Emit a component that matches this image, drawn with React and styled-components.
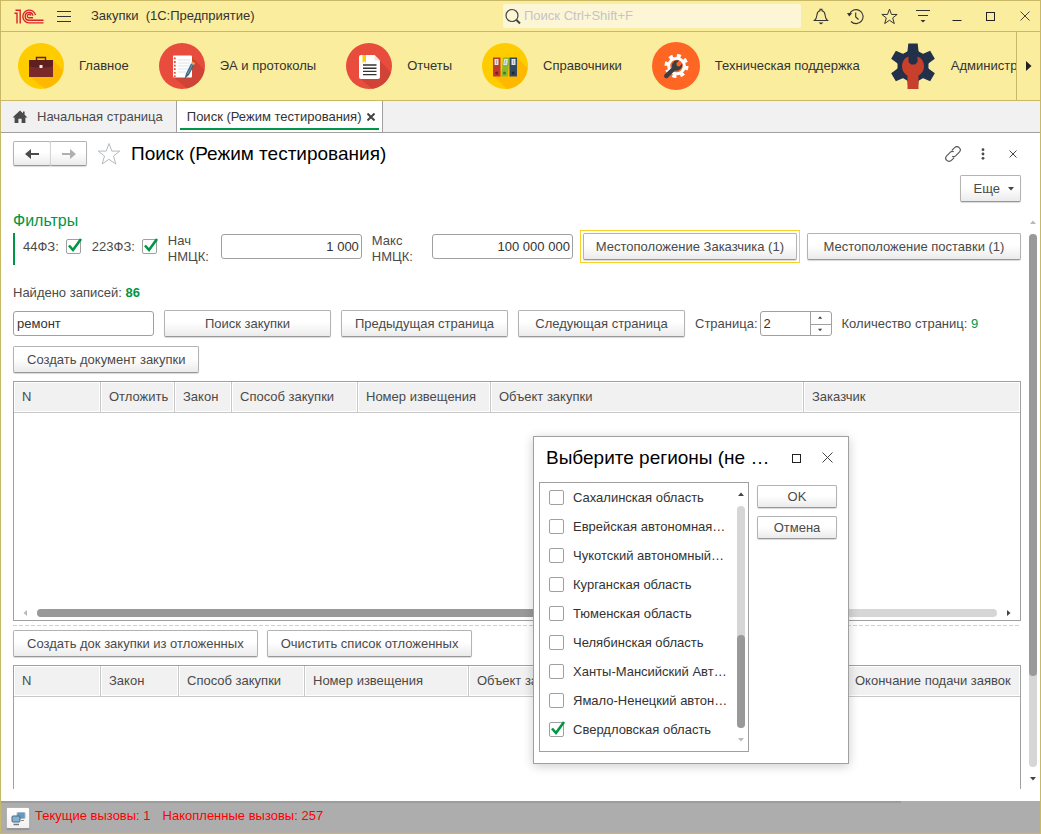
import React, { useState } from "react";
import styled, { createGlobalStyle } from "styled-components";

const sections = [
  { title: "Главное", icon: BriefcaseIcon },
  { title: "ЭА и протоколы", icon: NotebookIcon },
  { title: "Отчеты", icon: ReportIcon },
  { title: "Справочники", icon: BindersIcon },
  { title: "Техническая поддержка", icon: SupportIcon },
  { title: "Администрирование", icon: AdminIcon },
];

const purchaseColumns = [
  { title: "N", width: 87 },
  { title: "Отложить", width: 74 },
  { title: "Закон", width: 57 },
  { title: "Способ закупки", width: 126 },
  { title: "Номер извещения", width: 133 },
  { title: "Объект закупки" },
  { title: "Заказчик", width: 216 },
];

const postponedColumns = [
  { title: "N", width: 87 },
  { title: "Закон", width: 78 },
  { title: "Способ закупки", width: 126 },
  { title: "Номер извещения", width: 164 },
  { title: "Объект закупки" },
  { title: "Окончание подачи заявок", width: 173 },
];

const regions = [
  "Сахалинская область",
  "Еврейская автономная…",
  "Чукотский автономный…",
  "Курганская область",
  "Тюменская область",
  "Челябинская область",
  "Ханты-Мансийский Авт…",
  "Ямало-Ненецкий автон…",
  "Свердловская область",
];

function App() {
  return (
    <Window>
      <GlobalStyle />
      <TitleBar />
      <SectionBar>
        <SectionList>
          {sections.map(({ title, icon: Icon }) => (
            <SectionLink href="#" key={title}>
              <Icon />
              <span>{title}</span>
            </SectionLink>
          ))}
        </SectionList>
        <SectionScroll aria-label="Прокрутить разделы">
          <svg width="6" height="10" viewBox="0 0 6 10">
            <path d="M0 0L5.5 5L0 10Z" fill="#222" />
          </svg>
        </SectionScroll>
      </SectionBar>
      <TabBar>
        <HomeTab href="#">
          <svg width="16" height="14" viewBox="0 0 16 14">
            <path
              d="M8 0.5L0.5 7.5H2.6V13H6.4V8.8H9.6V13H13.4V7.5H15.5L12.6 4.8V1.4H11V3.3Z"
              fill="#4a4a4a"
            />
          </svg>
          Начальная страница
        </HomeTab>
        <ActiveTab>
          <span>Поиск (Режим тестирования)</span>
          <TabClose aria-label="Закрыть вкладку">
            <Cross size={8} width={2} />
          </TabClose>
        </ActiveTab>
      </TabBar>
      <FormHeader />
      <FormBody>
        <Form />
        <VerticalScroll>
          <Arrow dir="up" color="#b9b9b9" />
          <Track>
            <Thumb $size={83} />
          </Track>
          <Arrow dir="down" color="#444" />
        </VerticalScroll>
      </FormBody>
      <StatusBar>
        <StatusButton aria-label="Показатели производительности">
          <MonitorsIcon />
        </StatusButton>
        <StatusText>
          <span>Текущие вызовы: 1</span>
          <span>Накопленные вызовы: 257</span>
        </StatusText>
      </StatusBar>
      <RegionDialog />
    </Window>
  );
}

function TitleBar() {
  return (
    <Header>
      <LogoIcon />
      <MenuButton aria-label="Меню">
        <svg width="14" height="13" viewBox="0 0 14 13">
          <path d="M0 1.5H14M0 6.5H14M0 11.5H14" stroke="#333" />
        </svg>
      </MenuButton>
      <AppTitle>Закупки&nbsp; (1С:Предприятие)</AppTitle>
      <GlobalSearch>
        <svg width="17" height="17" viewBox="0 0 17 17" fill="none" stroke="#444">
          <circle cx="7" cy="7.5" r="6" strokeWidth="1.2" />
          <path d="M11.5 12L15 15.5" strokeWidth="2" />
        </svg>
        <input aria-label="Поиск" placeholder="Поиск Ctrl+Shift+F" />
      </GlobalSearch>
      <TitleTools>
        <ToolButton aria-label="Оповещения">
          <svg width="16" height="17" viewBox="0 0 16 17" fill="none" stroke="#333" strokeWidth="1.1">
            <path d="M1.5 12.5C3.6 11 3.6 9 4 6.5C4.3 4.4 5.4 3.2 7 2.8V1.2H9V2.8C10.6 3.2 11.7 4.4 12 6.5C12.4 9 12.4 11 14.5 12.5Z" />
            <path d="M5.5 14.5H10.5L8 16.5Z" fill="#333" stroke="none" />
          </svg>
        </ToolButton>
        <ToolButton aria-label="История">
          <svg width="17" height="17" viewBox="0 0 17 17" fill="none" stroke="#333" strokeWidth="1.1">
            <path d="M2.5 6.2A7 7 0 1 1 4 13.5M8.7 4.5V9L11.5 11.5" />
            <path d="M0 5L5.2 5.2L2.2 8.5Z" fill="#333" stroke="none" />
          </svg>
        </ToolButton>
        <ToolButton aria-label="Избранное">
          <StarIcon size={17} color="#333" />
        </ToolButton>
        <ToolButton aria-label="Настройки">
          <svg width="14" height="13" viewBox="0 0 14 13">
            <path d="M0 0.5H14M2 5.500H12" stroke="#333" />
            <path d="M4.5 10H9.5L7 12.5Z" fill="#333" />
          </svg>
        </ToolButton>
        <ToolButton aria-label="Свернуть">
          <svg width="10" height="10" viewBox="0 0 10 10">
            <path d="M0.5 9.5H9.5" stroke="#222" />
          </svg>
        </ToolButton>
        <ToolButton aria-label="Развернуть">
          <SquareIcon />
        </ToolButton>
        <ToolButton aria-label="Закрыть">
          <Cross size={10} width={1} />
        </ToolButton>
      </TitleTools>
    </Header>
  );
}

function FormHeader() {
  return (
    <FormTop>
      <TitleRow>
        <History>
          <HistoryButton aria-label="Назад">
            <ArrowLeft color="#4a4a4a" />
          </HistoryButton>
          <HistoryButton aria-label="Вперед" disabled>
            <ArrowLeft color="#b0b0b0" flip />
          </HistoryButton>
        </History>
        <IconButton aria-label="В избранное">
          <StarIcon size={24} color="#b5b9c0" />
        </IconButton>
        <FormTitle>Поиск (Режим тестирования)</FormTitle>
        <FormTools>
          <IconButton aria-label="Ссылка">
            <svg width="16" height="16" viewBox="0 0 16 16" fill="none" stroke="#5a5a5a" strokeWidth="1.2">
              <path d="M6.8 4.4L9.6 1.7A2.8 2.8 0 0 1 14.3 6.2L10.6 9.9A2.8 2.8 0 0 1 7.2 10.2" />
              <path d="M9.2 11.6L6.4 14.3A2.8 2.8 0 0 1 1.7 9.8L5.4 6.1A2.8 2.8 0 0 1 8.8 5.8" />
            </svg>
          </IconButton>
          <IconButton aria-label="Дополнительно">
            <svg width="4" height="12" viewBox="0 0 4 12" fill="#4a4a4a">
              <circle cx="2" cy="1.7" r="1.4" />
              <circle cx="2" cy="6" r="1.4" />
              <circle cx="2" cy="10.3" r="1.4" />
            </svg>
          </IconButton>
          <IconButton aria-label="Закрыть форму">
            <Cross size={8} width={1} />
          </IconButton>
        </FormTools>
      </TitleRow>
      <MoreButton>
        Еще
        <Arrow dir="down" color="#444" />
      </MoreButton>
    </FormTop>
  );
}

function Form() {
  const [page, setPage] = useState(2);

  return (
    <FormMain>
      <GroupTitle>Фильтры</GroupTitle>
      <Filters>
        <CheckLabel>
          44ФЗ:
          <CheckBox defaultChecked />
        </CheckLabel>
        <CheckLabel>
          223ФЗ:
          <CheckBox defaultChecked />
        </CheckLabel>
        <PriceLabel htmlFor="min-price" $width={43}>
          Нач НМЦК:
        </PriceLabel>
        <PriceInput id="min-price" defaultValue="1 000" />
        <PriceLabel htmlFor="max-price" $width={50}>
          Макс НМЦК:
        </PriceLabel>
        <PriceInput id="max-price" defaultValue="100 000 000" />
        <PlaceButton $focused>Местоположение Заказчика (1)</PlaceButton>
        <PlaceButton>Местоположение поставки (1)</PlaceButton>
      </Filters>
      <Found>
        Найдено записей: <b>86</b>
      </Found>
      <SearchRow>
        <TextInput aria-label="Строка поиска" defaultValue="ремонт" />
        <WideButton>Поиск закупки</WideButton>
        <WideButton>Предыдущая страница</WideButton>
        <WideButton>Следующая страница</WideButton>
        <PageLabel>
          Страница:
          <Spinner>
            <input value={page} onChange={(e) => setPage(e.target.value)} />
            <SpinnerButtons>
              <button aria-label="Больше" onClick={() => setPage(Number(page) + 1)}>
                <Arrow dir="up" color="#444" small />
              </button>
              <button aria-label="Меньше" onClick={() => setPage(Number(page) - 1)}>
                <Arrow dir="down" color="#444" small />
              </button>
            </SpinnerButtons>
          </Spinner>
        </PageLabel>
        <span>
          Количество страниц: <Green>9</Green>
        </span>
      </SearchRow>
      <Commands>
        <Button>Создать документ закупки</Button>
      </Commands>
      <PurchaseFrame>
        <ColumnTable columns={purchaseColumns} />
        <HorizontalScroll>
          <Arrow dir="left" color="#b9b9b9" />
          <HorizontalTrack>
            <HorizontalThumb $size={60} />
          </HorizontalTrack>
          <Arrow dir="right" color="#444" />
        </HorizontalScroll>
      </PurchaseFrame>
      <Splitter />
      <PostponedCommands>
        <Button>Создать док закупки из отложенных</Button>
        <Button>Очистить список отложенных</Button>
      </PostponedCommands>
      <PostponedFrame>
        <ColumnTable columns={postponedColumns} />
      </PostponedFrame>
    </FormMain>
  );
}

function ColumnTable({ columns }) {
  return (
    <Table>
      <colgroup>
        {columns.map((col) => (
          <col key={col.title} width={col.width} />
        ))}
      </colgroup>
      <thead>
        <tr>
          {columns.map((col) => (
            <th key={col.title}>{col.title}</th>
          ))}
        </tr>
      </thead>
    </Table>
  );
}

function RegionDialog() {
  return (
    <Dialog role="dialog" aria-labelledby="region-title">
      <DialogHeader>
        <DialogTitle id="region-title">Выберите регионы (не …</DialogTitle>
        <IconButton aria-label="Развернуть окно">
          <SquareIcon />
        </IconButton>
        <IconButton aria-label="Закрыть окно">
          <Cross size={11} width={1} />
        </IconButton>
      </DialogHeader>
      <DialogBody>
        <RegionBox>
          <RegionList>
            {regions.map((region) => (
              <li key={region}>
                <RegionLabel>
                  <CheckBox defaultChecked={region === "Свердловская область"} />
                  {region}
                </RegionLabel>
              </li>
            ))}
          </RegionList>
          <RegionScroll>
            <Arrow dir="up" color="#444" />
            <RegionTrack>
              <Thumb $size={42} />
            </RegionTrack>
            <Arrow dir="down" color="#b9b9b9" />
          </RegionScroll>
        </RegionBox>
        <DialogButtons>
          <DialogButton>OK</DialogButton>
          <DialogButton>Отмена</DialogButton>
        </DialogButtons>
      </DialogBody>
    </Dialog>
  );
}

function CheckBox(props) {
  return (
    <CheckWrap>
      <input type="checkbox" {...props} />
      <svg width="16" height="16" viewBox="0 0 16 16" fill="none">
        <path d="M2 7.5L6 12L14 1" stroke="#009646" strokeWidth="2.6" />
      </svg>
    </CheckWrap>
  );
}

const arrowPaths = {
  up: "M0 4L3 0.5L6 4Z",
  down: "M0 1L3 4.5L6 1Z",
  left: "M4 0L0.5 3L4 6Z",
  right: "M1 0L4.5 3L1 6Z",
};

function Arrow({ dir, color, small }) {
  const vertical = dir === "up" || dir === "down";
  const w = vertical ? 6 : 5;
  const h = vertical ? 5 : 6;
  const k = small ? 0.7 : 1;
  return (
    <svg width={w * k} height={h * k} viewBox={`0 0 ${w} ${h}`}>
      <path d={arrowPaths[dir]} fill={color} />
    </svg>
  );
}

function ArrowLeft({ color, flip }) {
  return (
    <svg width="14" height="10" viewBox="0 0 14 10">
      <path
        d="M0 5L6 0V3.9H14V6.1H6V10Z"
        fill={color}
        transform={flip ? "rotate(180 7 5)" : undefined}
      />
    </svg>
  );
}

function Cross({ size, width }) {
  return (
    <svg width={size} height={size} viewBox={`0 0 ${size} ${size}`}>
      <path
        d={`M0.5 0.5L${size - 0.5} ${size - 0.5}M${size - 0.5} 0.5L0.5 ${size - 0.5}`}
        stroke="#444"
        strokeWidth={width}
      />
    </svg>
  );
}

function SquareIcon() {
  return (
    <svg width="10" height="10" viewBox="0 0 10 10">
      <rect x="0.5" y="1.5" width="8" height="8" fill="none" stroke="#222" />
    </svg>
  );
}

function StarIcon({ size, color }) {
  return (
    <svg width={size} height={size} viewBox="0 0 24 24" fill="none" stroke={color} strokeWidth={24 / size}>
      <path d="M12 1.5L14.8 9.1H22.8L16.5 14L18.8 22L12 17.3L5.2 22L7.5 14L1.2 9.1H9.2Z" />
    </svg>
  );
}

function LogoIcon() {
  return (
    <svg width="30" height="15" viewBox="0 0 30 15" fill="none" stroke="#d8232a" strokeWidth="1.4">
      <path d="M0.500 4.200H3V14.500M1.500 1.200H6.200V14.500" />
      <path d="M21.5 6.2A6.4 6.4 0 1 0 15 13.9H29.500" />
      <path d="M18.9 6.6A3.9 3.9 0 1 0 15 11.3H29.500" />
      <path d="M16.7 6.7A1.7 1.7 0 1 0 15.2 8.7H19" />
    </svg>
  );
}

function BriefcaseIcon() {
  return (
    <svg width="46" height="46" viewBox="0 0 46 46">
      <circle cx="23" cy="23" r="23" fill="#fc0" />
      <path d="M35 17L45 27A23 23 0 0 1 27 45.6L12 34Z" fill="#ffb800" />
      <path d="M18.5 17V14.5H27.5V17" fill="none" stroke="#5d2420" strokeWidth="1.4" />
      <rect x="11" y="17" width="24" height="17" fill="#7a2a28" />
      <path d="M11 17H35V23C30 25 16 25 11 23Z" fill="#5f1f1f" />
      <rect x="21.5" y="22" width="3" height="3" fill="#eee" />
    </svg>
  );
}

function NotebookIcon() {
  return (
    <svg width="46" height="46" viewBox="0 0 46 46">
      <circle cx="23" cy="23" r="23" fill="#e84c3d" />
      <path d="M33 14L45.5 27A23 23 0 0 1 28 45.4L14 34Z" fill="#cf4436" />
      <rect x="14" y="12.5" width="19" height="22" rx="1" fill="#fff" />
      <path d="M19 17H31M19 20H31M19 23H30M19 26H29M19 29H27" stroke="#dce3e6" />
      <path d="M15.8 14.5V34" stroke="#e84c3d" strokeWidth="1.8" strokeDasharray="1.8 1.8" />
      <path d="M25.5 36L27 30.5L32 20.5L35.2 22L30 32Z" fill="#3f6b82" />
      <path d="M31.9 20.7L33 18.5L36 20L35 22.2Z" fill="#f3a92a" />
      <path d="M28.5 31L33.5 21.4" stroke="#6f9db5" strokeWidth="1" />
    </svg>
  );
}

function ReportIcon() {
  return (
    <svg width="46" height="46" viewBox="0 0 46 46">
      <circle cx="23" cy="23" r="23" fill="#e84c3d" />
      <path d="M34 18L44.8 29.5A23 23 0 0 1 26 45.8L14 35Z" fill="#cf4436" />
      <path
        d="M15 12H28.5L34 17.500V34A2 2 0 0 1 32 36H15A2 2 0 0 1 13 34V14A2 2 0 0 1 15 12Z"
        fill="#fff"
      />
      <path d="M28.5 12V17.5H34Z" fill="#e6e6e6" />
      <path d="M16.5 12H20V20L18.2 18.2L16.5 20Z" fill="#fc0" />
      <path d="M17 22H30.5M17 25.2H30.5M17 28.4H30.5M17 31.6H30.5" stroke="#333" strokeWidth="1.4" />
    </svg>
  );
}

function BindersIcon() {
  return (
    <svg width="46" height="46" viewBox="0 0 46 46">
      <circle cx="23" cy="23" r="23" fill="#fc0" />
      <path d="M35 14.5L45.5 25A23 23 0 0 1 25 46L12 33.5Z" fill="#ffb800" />
      <rect x="11" y="14.5" width="7.5" height="19" fill="#c0392b" />
      <path d="M21 14.5H27.5L25.5 33.5H19.5Z" fill="#8ab82e" />
      <rect x="27.5" y="14.5" width="7.5" height="19" fill="#34495e" />
      <path d="M12.5 16H16.5V22H12.500ZM22 16H26L25 22H21.3ZM29.5 16H33.500V22H29.5Z" fill="#dde2e4" />
      <path d="M14.5 17V21M23.7 17L23 21M31.5 17V21" stroke="#aaa" />
      <circle cx="14.700" cy="30" r="1.5" fill="#7d1f16" />
      <circle cx="22.500" cy="30" r="1.5" fill="#4e7a10" />
      <circle cx="31.200" cy="30" r="1.5" fill="#1c2a38" />
    </svg>
  );
}

function SupportIcon() {
  return (
    <svg width="48" height="48" viewBox="0 0 48 48">
      <circle cx="24" cy="24" r="24" fill="#ff6523" />
      <circle cx="24.500" cy="24" r="10" fill="none" stroke="#fff" strokeWidth="4" strokeDasharray="3.93 3.93" />
      <circle cx="24.500" cy="24" r="7.8" fill="none" stroke="#fff" strokeWidth="3" />
      <path
        d="M12.5 32.5L20 25.5C19 21.5 22.5 17.5 27 18.5L24.3 21.5L25 24L27.500 24.500L30.200 21.5C31 26 27 29.500 23 28.500L15.500 36C13 37 11.300 34.500 12.500 32.500Z"
        fill="#3a3f45"
      />
    </svg>
  );
}

function AdminIcon() {
  return (
    <svg width="46" height="46" viewBox="0 0 46 46">
      <g fill="#22304a">
        <circle cx="23" cy="23" r="15.5" />
        {[0, 60, 120, 180, 240, 300].map((angle) => (
          <path key={angle} d="M15.5 11L17.500 8L18.300 0.500H27.700L28.500 8L30.500 11Z" transform={`rotate(${angle} 23 23)`} />
        ))}
      </g>
      <path
        d="M18.5 13.500V19L21 21.500H25L27.500 19V13.500C31.500 15 34 19 34 23.200C34 27.500 31.500 31 28.500 32.500V46H17.500V32.500C14.500 31 12 27.500 12 23.200C12 19 14.500 15 18.500 13.500Z"
        fill="#c6402c"
      />
    </svg>
  );
}

function MonitorsIcon() {
  return (
    <svg width="15" height="15" viewBox="0 0 15 15">
      <rect x="6" y="1.5" width="8" height="6" rx="1" fill="#5c9cc9" stroke="#aab4bb" />
      <path d="M10 9.500H13" stroke="#888" />
      <rect x="1" y="5" width="8" height="6" rx="1" fill="#7db4dc" stroke="#59666f" />
      <path d="M2.5 13.500H8" stroke="#777" strokeWidth="1.5" />
    </svg>
  );
}

export default App;

const GlobalStyle = createGlobalStyle`
  * {
    box-sizing: border-box;
  }
  body {
    margin: 0;
    background: #fff;
  }
  body, button, input {
    font-family: "Liberation Sans", Arial, sans-serif;
    font-size: 13px;
    line-height: 16px;
    color: #4a4a4a;
  }
  button {
    cursor: pointer;
  }
  svg {
    display: block;
    flex: none;
  }
`;

const Window = styled.div`
  position: relative;
  display: flex;
  flex-direction: column;
  min-height: 100vh;
  border: 1px solid #c9b866;
  background: #fff;
  overflow: hidden;
`;

const Header = styled.header`
  display: flex;
  align-items: center;
  height: 31px;
  padding-left: 13px;
  background: #fbed9e;
  border-bottom: 1px solid #c9b866;
`;
const PlainButton = styled.button`
  display: flex;
  align-items: center;
  justify-content: center;
  padding: 0;
  border: none;
  background: none;
`;
const MenuButton = styled(PlainButton)`
  margin: 0 20px 0 13px;
`;
const AppTitle = styled.span`
  color: #333;
  white-space: nowrap;
`;
const GlobalSearch = styled.label`
  display: flex;
  align-items: center;
  gap: 2px;
  flex: 0 1 298px;
  height: 24px;
  margin-left: auto;
  padding: 0 2px;
  border-radius: 2px;
  background: #fdf6d6;

  input {
    flex: 1;
    min-width: 0;
    padding: 0;
    border: none;
    background: none;
    outline: none;
  }
  input::placeholder {
    color: #c4c4c4;
    opacity: 1;
  }
`;
const TitleTools = styled.div`
  display: flex;
  gap: 4px;
  margin-left: 5px;
`;
const ToolButton = styled(PlainButton)`
  width: 30px;
  height: 30px;
`;

const SectionBar = styled.nav`
  display: flex;
  height: 69px;
  background: #fbed9e;
  border-bottom: 1px solid #c9b866;
`;
const SectionList = styled.div`
  display: flex;
  flex: 1;
  min-width: 0;
  gap: 30px;
  padding-left: 17px;
  overflow: hidden;
`;
const SectionLink = styled.a`
  display: flex;
  flex: none;
  align-items: center;
  gap: 15px;
  color: #333;
  text-decoration: none;
  white-space: nowrap;
`;
const SectionScroll = styled(PlainButton)`
  width: 24px;
  border-left: 1px solid #c9b866;
`;

const TabBar = styled.div`
  display: flex;
  height: 32px;
  background: #f1f1f1;
  border-bottom: 1px solid #a0a0a0;
`;
const HomeTab = styled.a`
  display: flex;
  align-items: center;
  gap: 9px;
  padding: 0 13px 0 11px;
  border-right: 1px solid #a0a0a0;
  color: #4a4a4a;
  text-decoration: none;
  white-space: nowrap;
`;
const ActiveTab = styled.div`
  display: flex;
  align-items: center;
  gap: 6px;
  padding: 0 7px 0 10px;
  border-right: 1px solid #a0a0a0;
  background: linear-gradient(#009646, #009646) 3px 27px / calc(100% - 6px) 2px
    no-repeat #fff;
  color: #333;
  white-space: nowrap;
`;
const TabClose = styled(PlainButton)`
  height: 16px;
`;

const FormTop = styled.div`
  display: flex;
  flex-direction: column;
  padding: 8px 19px 10px 12px;
`;
const TitleRow = styled.div`
  display: flex;
  align-items: center;
  height: 25px;
`;
const Button = styled.button`
  height: 27px;
  padding: 0 13px;
  border: 1px solid #b3b3b3;
  border-bottom-color: #979797;
  border-radius: 2px;
  background: linear-gradient(#fff 45%, #ebebeb);
  box-shadow: 0 1px 1px rgba(0, 0, 0, 0.15);
  white-space: nowrap;
`;
const History = styled.div`
  display: flex;
  margin-right: 10px;
`;
const HistoryButton = styled(Button)`
  display: flex;
  align-items: center;
  justify-content: center;
  width: 38px;
  height: 25px;
  padding: 0;

  & + & {
    width: 37px;
    margin-left: -1px;
    border-left-color: #d6d6d6;
  }
`;
const IconButton = styled(PlainButton)`
  min-width: 16px;
  height: 24px;
`;
const FormTitle = styled.h1`
  margin: 0 0 0 10px;
  font-size: 19px;
  font-weight: normal;
  line-height: 24px;
  color: #000;
  white-space: nowrap;
`;
const FormTools = styled.div`
  display: flex;
  gap: 14px;
  margin-left: auto;
`;
const MoreButton = styled(Button)`
  display: flex;
  align-items: center;
  align-self: flex-end;
  gap: 8px;
  margin-top: 9px;
  padding: 0 6px 0 13px;
`;

const FormBody = styled.div`
  display: flex;
  flex: 1;
`;
const FormMain = styled.main`
  display: flex;
  flex: 1;
  flex-direction: column;
  min-width: 0;
  padding: 0 0 12px 12px;
`;
const GroupTitle = styled.h2`
  margin: 0 0 3px;
  font-size: 16px;
  font-weight: normal;
  line-height: 18px;
  color: #009646;
`;
const Filters = styled.div`
  display: flex;
  gap: 10px;
  padding-left: 8px;
  border-left: 2px solid #009646;
`;
const CheckLabel = styled.label`
  display: flex;
  align-items: center;
  gap: 7px;
  height: 27px;
`;
const CheckWrap = styled.span`
  position: relative;
  flex: none;
  width: 16px;

  input {
    display: block;
    width: 15px;
    height: 15px;
    margin: 0;
    appearance: none;
    border: 1px solid #a0a0a0;
    border-radius: 2px;
    background: #fff;
  }
  svg {
    position: absolute;
    top: -1px;
    left: 1px;
    visibility: hidden;
    pointer-events: none;
  }
  input:checked + svg {
    visibility: visible;
  }
`;
const PriceLabel = styled.label`
  flex: none;
  width: ${(props) => props.$width}px;
`;
const TextInput = styled.input`
  width: 141px;
  height: 25px;
  padding: 0 3px;
  border: 1px solid #a0a0a0;
  border-radius: 3px;
  color: #333;
`;
const PriceInput = styled(TextInput)`
  margin-top: 1px;
  padding: 0 2px;
  text-align: right;
`;
const PlaceButton = styled(Button)`
  position: relative;
  flex: 1;
  padding: 0;

  &::after {
    content: "";
    display: ${(props) => (props.$focused ? "block" : "none")};
    position: absolute;
    inset: -4px;
    border: 1px solid #f9cf2c;
  }
`;
const Found = styled.div`
  margin: 20px 0 9px;

  b {
    color: #009646;
  }
`;
const SearchRow = styled.div`
  display: flex;
  align-items: center;
  gap: 10px;
  white-space: nowrap;
`;
const WideButton = styled(Button)`
  width: 167px;
  padding: 0;
`;
const PageLabel = styled.label`
  display: flex;
  align-items: center;
  gap: 2px;
`;
const Spinner = styled.span`
  display: flex;
  width: 72px;
  height: 25px;
  border: 1px solid #a0a0a0;
  border-radius: 3px;

  input {
    flex: 1;
    min-width: 0;
    padding: 0 3px;
    border: none;
    background: none;
    color: #333;
  }
`;
const SpinnerButtons = styled.span`
  display: grid;
  grid-template-rows: 1fr 1fr;
  width: 21px;
  border-left: 1px solid #a0a0a0;

  button {
    display: flex;
    align-items: center;
    justify-content: center;
    padding: 0;
    border: none;
    background: none;
  }
  button + button {
    border-top: 1px solid #a0a0a0;
  }
`;
const Green = styled.span`
  color: #009646;
`;
const Commands = styled.div`
  display: flex;
  gap: 9px;
  margin: 9px 0 8px;
`;
const PostponedCommands = styled(Commands)`
  margin-top: 4px;
`;
const Frame = styled.div`
  display: flex;
  flex-direction: column;
  border: 1px solid #a0a0a0;
`;
const PurchaseFrame = styled(Frame)`
  height: 240px;
`;
const PostponedFrame = styled(Frame)`
  flex: 1;
  min-height: 80px;
  border-bottom: none;
`;
const Table = styled.table`
  width: 100%;
  table-layout: fixed;
  border-collapse: separate;
  border-spacing: 0;

  th {
    height: 31px;
    padding: 0 8px;
    border-right: 1px solid #c8c8c8;
    border-bottom: 1px solid #c8c8c8;
    background: #f1f1f1;
    box-shadow: inset 0 0 0 1px #fff;
    font-weight: normal;
    text-align: left;
    white-space: nowrap;
  }
  th:last-child {
    border-right: none;
  }
`;
const HorizontalScroll = styled.div`
  display: flex;
  align-items: center;
  gap: 9px;
  margin-top: auto;
  padding: 3px 9px;
`;
const HorizontalTrack = styled.div`
  flex: 1;
  height: 8px;
  border-radius: 4px;
  background: #d6d6d6;
`;
const HorizontalThumb = styled.div`
  width: ${(props) => props.$size}%;
  height: 100%;
  border-radius: 4px;
  background: #999;
`;
const Splitter = styled.div`
  height: 1px;
  margin-top: 4px;
  background: repeating-linear-gradient(90deg, #d0d0d0 0 4px, transparent 4px 6px);
`;
const VerticalScroll = styled.div`
  display: flex;
  flex-direction: column;
  align-items: center;
  gap: 9px;
  width: 19px;
  padding: 8px 3px 20px 8px;
`;
const Track = styled.div`
  flex: 1;
  width: 8px;
  border-radius: 4px;
  background: #d6d6d6;
`;
const Thumb = styled.div`
  width: 8px;
  height: ${(props) => props.$size}%;
  border-radius: 4px;
  background: #999;
`;

const StatusBar = styled.footer`
  display: flex;
  gap: 5px;
  height: 32px;
  padding: 6px 5px;
  background: linear-gradient(#9c9c9c, #9c9c9c) 0 0 / 900px 2px no-repeat #adadad;
`;
const StatusButton = styled(Button)`
  display: flex;
  align-items: center;
  justify-content: center;
  width: 24px;
  height: 22px;
  padding: 0;
  background: linear-gradient(#fff, #f1f1f1);
`;
const StatusText = styled.div`
  display: flex;
  gap: 12px;
  line-height: 18px;
  color: #f00;
`;

const Dialog = styled.section`
  position: absolute;
  top: 435px;
  left: 532px;
  display: flex;
  flex-direction: column;
  width: 316px;
  height: 328px;
  padding: 8px 11px 11px 5px;
  border: 1px solid #a0a0a0;
  background: #fff;
  box-shadow: 0 2px 10px rgba(0, 0, 0, 0.2);
`;
const DialogHeader = styled.header`
  display: flex;
  align-items: center;
  gap: 14px;
  height: 25px;
  margin-bottom: 12px;
  padding: 0 2px 0 7px;
`;
const DialogTitle = styled(FormTitle)`
  flex: 1;
  margin: 0;
`;
const DialogBody = styled.div`
  display: flex;
  flex: 1;
  gap: 8px;
`;
const RegionBox = styled.div`
  display: flex;
  flex: 1;
  border: 1px solid #a0a0a0;
`;
const RegionList = styled.ul`
  flex: 1;
  margin: 0;
  padding: 0 0 0 9px;
  list-style: none;
`;
const RegionLabel = styled.label`
  display: flex;
  align-items: center;
  gap: 8px;
  height: 29px;
  color: #333;
  white-space: nowrap;
`;
const RegionScroll = styled.div`
  display: flex;
  flex-direction: column;
  align-items: center;
  gap: 9px;
  width: 14px;
  padding: 9px 3px;
`;
const RegionTrack = styled(Track)`
  display: flex;
  flex-direction: column;
  justify-content: flex-end;
`;
const DialogButtons = styled.div`
  display: flex;
  flex-direction: column;
  gap: 8px;
  padding-top: 3px;
`;
const DialogButton = styled(Button)`
  width: 80px;
  height: 23px;
  padding: 0;
`;
